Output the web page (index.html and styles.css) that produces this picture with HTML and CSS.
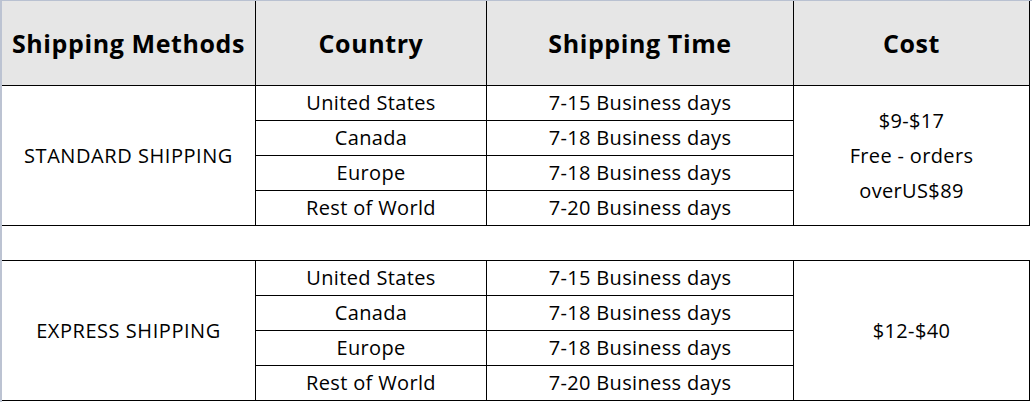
FILE: index.html
```html
<!DOCTYPE html>
<html>
<head>
<meta charset="utf-8">
<link rel="stylesheet" href="styles.css">
</head>
<body>
<div class="sheet">
  <div class="grid">
    <div class="cell head">Shipping Methods</div>
    <div class="cell head">Country</div>
    <div class="cell head">Shipping Time</div>
    <div class="cell head">Cost</div>

    <div class="cell method span4">STANDARD SHIPPING</div>
    <div class="cell">United States</div>
    <div class="cell">7-15 Business days</div>
    <div class="cell cost span4"><span>$9-$17</span><span>Free - orders</span><span>overUS$89</span></div>
    <div class="cell">Canada</div>
    <div class="cell">7-18 Business days</div>
    <div class="cell">Europe</div>
    <div class="cell">7-18 Business days</div>
    <div class="cell">Rest of World</div>
    <div class="cell">7-20 Business days</div>

    <div class="cell spacer"></div>

    <div class="cell method span4">EXPRESS SHIPPING</div>
    <div class="cell">United States</div>
    <div class="cell">7-15 Business days</div>
    <div class="cell cost span4"><span>$12-$40</span></div>
    <div class="cell">Canada</div>
    <div class="cell">7-18 Business days</div>
    <div class="cell">Europe</div>
    <div class="cell">7-18 Business days</div>
    <div class="cell">Rest of World</div>
    <div class="cell">7-20 Business days</div>
  </div>
</div>
</body>
</html>
```

FILE: styles.css
```css
* { box-sizing: border-box; }
html, body { margin: 0; padding: 0; background: #fff; }
body {
  width: 1032px;
  height: 402px;
  overflow: hidden;
  font-family: "Open Sans", "Noto Sans CJK KR", sans-serif;
  color: #000;
}
.sheet {
  border-top: 1px solid #b9c1d1;
  border-left: 2px solid #bcc3d2;
  width: 1032px;
  height: 402px;
}
.grid {
  display: grid;
  grid-template-columns: 254px 231px 307px 236px;
  grid-template-rows: 85px repeat(9, 35px);
}
.cell {
  display: flex;
  align-items: center;
  justify-content: center;
  border-right: 1px solid #000;
  border-bottom: 1px solid #000;
  font-size: 20px;
  letter-spacing: 0.35px;
  white-space: nowrap;
  padding-bottom: 1px;
}
.head {
  background: #e6e6e6;
  font-weight: 700;
  font-size: 25px;
  letter-spacing: 0.6px;
}
.method { letter-spacing: 0.55px; }
.span4 { grid-row: span 4; }
.cost {
  flex-direction: column;
  line-height: 35px;
}
.spacer {
  grid-column: 1 / -1;
  border-right: none;
}
```
